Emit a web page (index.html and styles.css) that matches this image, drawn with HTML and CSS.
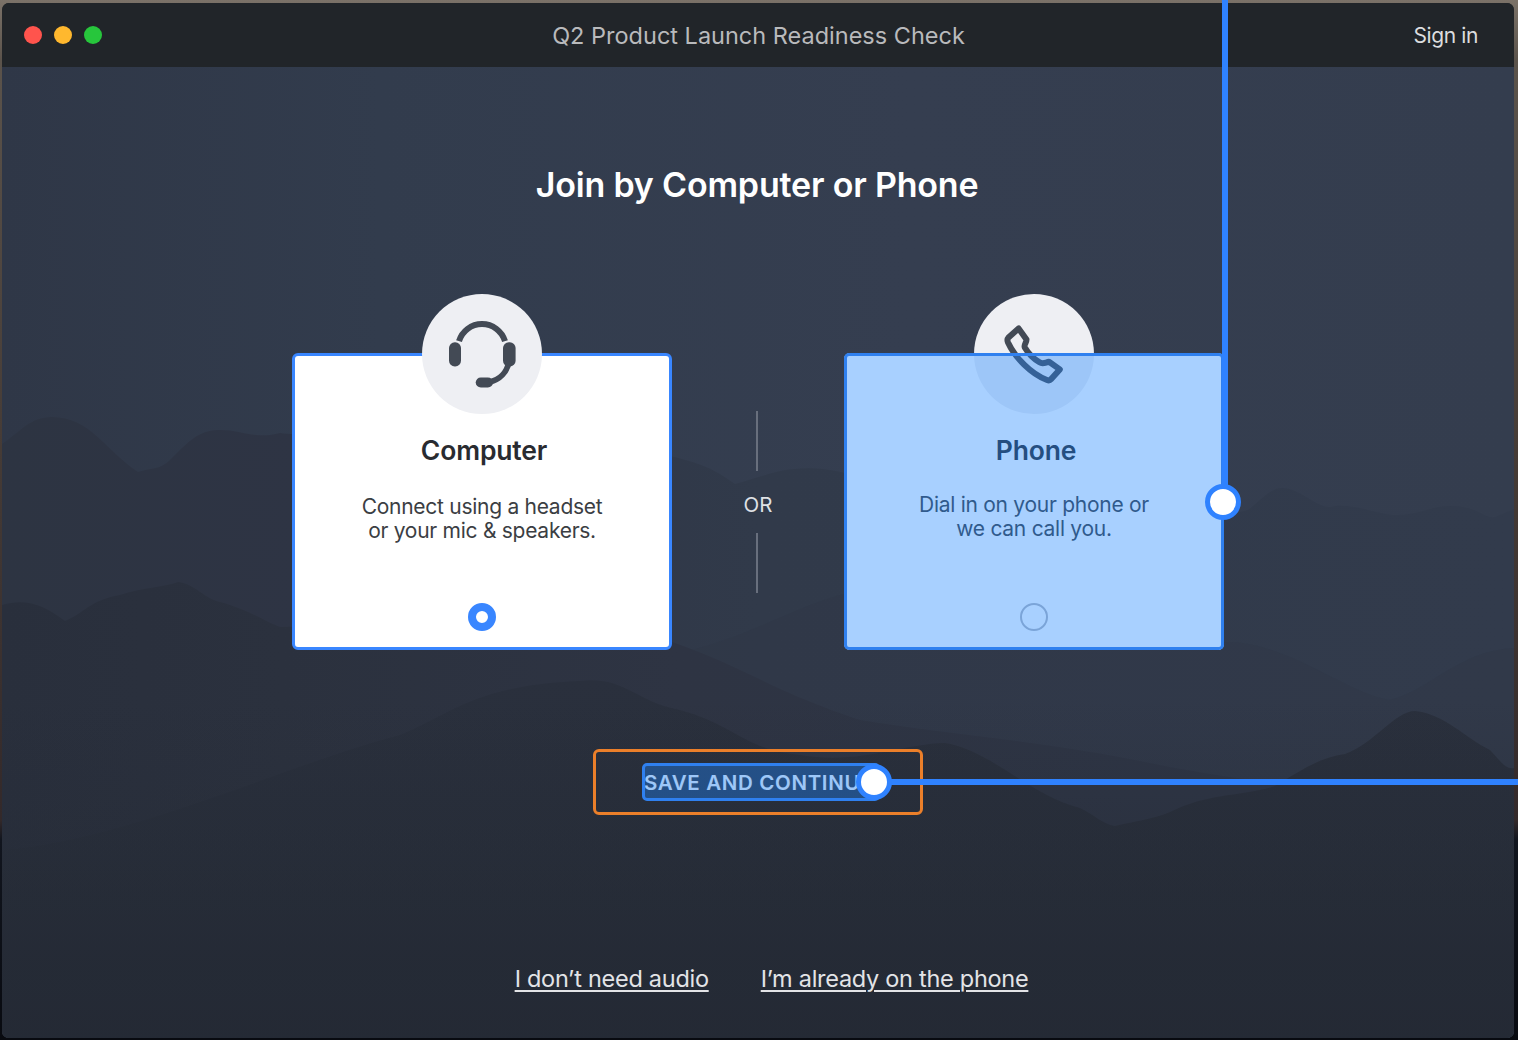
FILE: index.html
```html
<!DOCTYPE html>
<html lang="en">
<head>
<meta charset="utf-8">
<title>Q2 Product Launch Readiness Check</title>
<link rel="stylesheet" href="styles.css">
</head>
<body>
<div class="window">
  <svg class="scenery" viewBox="2 67 1512 971" preserveAspectRatio="none" aria-hidden="true">
    <defs>
      <linearGradient id="sky" x1="0" y1="0" x2="1" y2="0"><stop offset="0" stop-color="#2f3747"/><stop offset=".25" stop-color="#323c4d"/><stop offset=".6" stop-color="#353e50"/><stop offset="1" stop-color="#343d4e"/></linearGradient>
      <linearGradient id="far" gradientUnits="userSpaceOnUse" x1="2" y1="0" x2="1514" y2="0"><stop offset="0" stop-color="#2d3442"/><stop offset=".2" stop-color="#2e3444"/><stop offset=".5" stop-color="#313a4a"/><stop offset="1" stop-color="#323b4c"/></linearGradient>
      <linearGradient id="mid" gradientUnits="userSpaceOnUse" x1="2" y1="0" x2="1130" y2="0"><stop offset="0" stop-color="#292f3c"/><stop offset=".25" stop-color="#2b313e"/><stop offset=".6" stop-color="#2e3443"/><stop offset="1" stop-color="#2e3545"/></linearGradient>
      <linearGradient id="near" gradientUnits="userSpaceOnUse" x1="0" y1="680" x2="0" y2="1038"><stop offset="0" stop-color="#2a303d"/><stop offset=".5" stop-color="#282e3a"/><stop offset="1" stop-color="#242934"/></linearGradient>
      <linearGradient id="fade" gradientUnits="userSpaceOnUse" x1="0" y1="700" x2="0" y2="1038"><stop offset="0" stop-color="#242a35" stop-opacity="0"/><stop offset="1" stop-color="#242a35" stop-opacity=".7"/></linearGradient>
    </defs>
    <rect x="2" y="67" width="1512" height="971" fill="url(#sky)"/>
    <path fill="url(#far)" d="M2 444C20 432 30 417 52 417C90 417 105 450 138 472C150 468 160 470 170 460C185 445 198 430 218 430C240 429 255 440 280 433C330 440 500 420 660 453C690 462 705 462 735 484C765 477 790 460 845 473C1000 500 1180 530 1248 510C1262 500 1270 488 1282 488C1300 488 1315 507 1330 507C1350 502 1380 515 1395 515C1420 515 1430 506 1450 506C1475 505 1485 519 1495 517L1514 509V1038H2Z"/>
    <path fill="#2f3646" opacity=".4" d="M672 654C750 640 790 605 860 590C1000 620 1130 642 1230 642C1290 644 1350 695 1390 700C1430 690 1460 650 1514 648V1038H672Z"/>
    <path fill="url(#mid)" d="M2 605C25 598 43 604 65 621C83 614 90 600 120 595C145 587 165 587 178 582C195 584 205 599 220 602C250 610 265 622 280 627C400 625 560 640 672 642C740 665 770 690 860 720C950 735 1040 740 1160 765C1210 775 1250 780 1295 785L1130 860V1038H2Z"/>
    <path fill="url(#near)" d="M2 850C130 840 285 765 400 735C450 715 475 685 580 681C625 676 635 702 680 710C735 725 745 750 800 755C860 765 900 744 945 743C990 750 1030 795 1080 808C1095 815 1102 824 1115 826C1140 820 1150 820 1170 812C1210 792 1240 797 1275 786C1300 771 1320 757 1345 754C1375 743 1395 711 1415 711C1445 714 1465 738 1490 750C1500 760 1505 770 1514 768V1038H2Z"/>
    <rect x="2" y="700" width="1512" height="338" fill="url(#fade)"/>
  </svg>

  <header class="titlebar">
    <div class="lights"><i class="light close"></i><i class="light minimize"></i><i class="light zoom"></i></div>
    <div class="title">Q2 Product Launch Readiness Check</div>
    <a class="signin">Sign in</a>
  </header>

  <main class="stage">
    <h1 class="heading">Join by Computer or Phone</h1>
    <div class="options">
      <section class="card selected">
        <div class="badge">
          <svg viewBox="422 294 120 120" width="120" height="120" fill="none" stroke="#434a55" stroke-width="6">
            <path d="M459 341.2A24 24 0 0 1 505 341.2"/>
            <g fill="#434a55" stroke="none"><rect x="449" y="342.3" width="12" height="24.2" rx="5.8"/><rect x="503" y="342.3" width="12.6" height="24.2" rx="5.8"/><rect x="475.7" y="377.4" width="17.3" height="10.2" rx="5.1"/></g>
            <path d="M509.3 361C507 372 500 380 489 382" stroke-width="5.8"/>
          </svg>
        </div>
        <h2 class="name">Computer</h2>
        <p class="desc">Connect using a headset<br>or your mic &amp; speakers.</p>
        <span class="radio on"></span>
      </section>
      <div class="divider"><i class="rule"></i><span class="or">OR</span><i class="rule"></i></div>
      <section class="card phone">
        <div class="badge">
          <svg viewBox="974 294 120 120" width="120" height="120" fill="none" stroke="#434a55" stroke-width="6" stroke-linejoin="round">
            <path d="M1018.6 328.5L1008.5 337.5Q1006.7 339.5 1008 342.5C1015 357.5 1031 374 1047 380Q1049.5 381 1051 379.3L1059.8 369.4L1049 361.8C1045.5 362.3 1043 364.5 1039.5 362.3C1034 359 1028 353 1024.8 347.5C1023.5 345 1026.5 343 1026.5 339.5Z"/>
          </svg>
        </div>
        <h2 class="name">Phone</h2>
        <p class="desc">Dial in on your phone or<br>we can call you.</p>
        <span class="radio"></span>
      </section>
    </div>
    <button class="save"><span class="save-label">SAVE AND CONTINUE</span></button>
    <nav class="links"><a class="link">I don’t need audio</a><a class="link">I’m already on the phone</a></nav>
  </main>
</div>

<div class="highlight highlight-phone"></div>
<div class="highlight highlight-save"></div>
<div class="connector connector-phone"></div>
<div class="connector connector-save"></div>
<div class="handle handle-phone"></div>
<div class="handle handle-save"></div>
</body>
</html>
```
FILE: styles.css
```css
* { box-sizing: border-box; }

body {
  margin: 0;
  width: 1518px;
  height: 1040px;
  padding: 3px 4px 2px 2px;
  overflow: hidden;
  position: relative;
  font-family: Inter, "Liberation Sans", sans-serif;
  background: linear-gradient(#7b7268 0, #5b534b 60px, #453b36 450px, #33292a 820px, #11151e 840px, #080a10 1040px);
}

.window {
  position: relative;
  display: flex;
  flex-direction: column;
  height: 1035px;
  border-radius: 7px;
  overflow: hidden;
  background: #212529;
}

.scenery {
  position: absolute;
  inset: 64px 0 0;
  width: 100%;
  height: 971px;
}

.titlebar {
  position: relative;
  display: grid;
  grid-template-columns: 1fr auto 1fr;
  align-items: center;
  height: 64px;
  padding: 0 22px;
  background: #212529;
}

.lights { display: flex; gap: 12px; }
.light { width: 18px; height: 18px; border-radius: 50%; }
.close { background: #ff544d; }
.minimize { background: #ffb82e; }
.zoom { background: #27c63c; }

.title { padding: 1px 0 0 1px; font-size: 23.5px; line-height: 30px; color: #b9babc; }
.signin { justify-self: end; margin-right: 14px; font-size: 21px; letter-spacing: -.4px; color: #dcdddf; }

.stage {
  position: relative;
  display: flex;
  flex-direction: column;
  align-items: center;
}

.heading {
  margin: 96px 2px 0 0;
  font-size: 34px;
  line-height: 44px;
  font-weight: 600;
  letter-spacing: -.18px;
  color: #fff;
}

.options {
  display: grid;
  grid-template-columns: 380px 172px 380px;
  height: 297px;
  margin-top: 146px;
}

.card {
  display: flex;
  flex-direction: column;
  align-items: center;
  border: 3px solid #fff;
  border-radius: 6px;
  background: #fff;
  color: #3b3e43;
}
.selected { border-color: #3986ff; }

.badge {
  width: 120px;
  height: 120px;
  margin-top: -62px;
  border-radius: 50%;
  background: #eeeff3;
}
.badge svg { display: block; }

.name {
  margin: 20px 0 0;
  padding-left: 4px;
  font-size: 26.5px;
  line-height: 32px;
  font-weight: 600;
  letter-spacing: -.15px;
  color: #292b30;
}
.desc { margin: 29px 0 0; font-size: 21px; line-height: 24px; letter-spacing: -.27px; text-align: center; }
.phone .desc { margin-top: 27px; }

.radio {
  width: 28px;
  height: 28px;
  margin-top: 60px;
  border: 2px solid #b5b8c0;
  border-radius: 50%;
}
.phone .radio { margin-top: 62px; }
.radio.on { border: 8px solid #3986ff; }

.divider {
  display: flex;
  flex-direction: column;
  align-items: center;
  padding-top: 58px;
}
.rule { width: 2px; height: 60px; margin-right: 2px; background: #686f7d; }
.or { margin: 21px 0 15px; font-size: 20.5px; line-height: 26px; color: #dfe1e5; }

.save {
  width: 330px;
  height: 66px;
  margin-top: 99px;
  padding: 0 0 0 48px;
  border: 3px solid #eb7f2a;
  border-radius: 6px;
  background: transparent;
  text-align: left;
  font-family: inherit;
}
.save-label { font-size: 20.5px; font-weight: 600; letter-spacing: .65px; color: #eef0f4; }

.links { display: flex; gap: 52px; margin: 149px 0 0 27px; }
.link {
  font-size: 23.5px;
  line-height: 30px;
  letter-spacing: -.28px;
  color: #e3e4e7;
  text-decoration: underline;
  text-decoration-thickness: 2px;
  text-underline-offset: 3px;
}

/* Callouts laid over the window */
.highlight {
  position: absolute;
  border: 3px solid #2f80ef;
  border-radius: 5px;
  background: rgba(32, 134, 255, .39);
}
.highlight-phone { left: 844px; top: 353px; width: 380px; height: 297px; }
.highlight-save { left: 642px; top: 763px; width: 238px; height: 38px; }
.connector { position: absolute; background: #2f82ff; }
.connector-phone { left: 1222px; top: 0; width: 6px; height: 502px; }
.connector-save { left: 874px; top: 779px; width: 644px; height: 6px; }
.handle {
  position: absolute;
  width: 36px;
  height: 36px;
  border: 5px solid #2f82ff;
  border-radius: 50%;
  background: #fff;
}
.handle-phone { left: 1205px; top: 483.5px; }
.handle-save { left: 856px; top: 764px; }
```
